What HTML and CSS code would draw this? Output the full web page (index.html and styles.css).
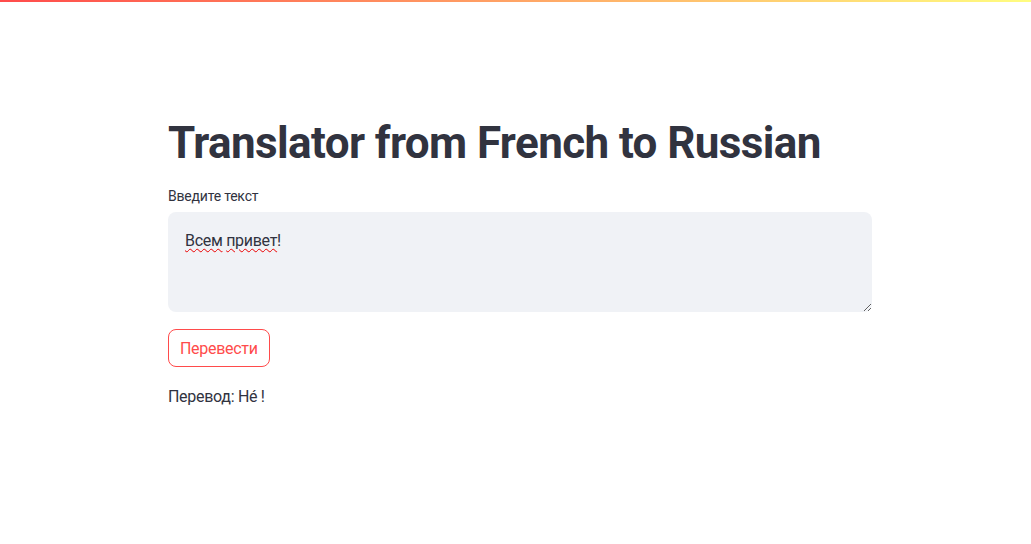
FILE: index.html
```html
<!DOCTYPE html>
<html lang="ru">
<head>
<meta charset="utf-8">
<title>Translator</title>
<link rel="stylesheet" href="styles.css">
</head>
<body>
<div class="decoration"></div>
<main class="block">
  <h1 class="title">Translator from French to Russian</h1>
  <label class="label">Введите текст</label>
  <div class="textarea"><span class="misspelled">Всем</span> <span class="misspelled">привет</span>!</div>
  <button class="btn">Перевести</button>
  <p class="result">Перевод: Hé !</p>
</main>
</body>
</html>
```
FILE: styles.css
```css
* { box-sizing: border-box; }
html, body { margin: 0; padding: 0; background: #fff; }
body {
  font-family: Roboto, "Noto Sans", sans-serif;
  color: rgb(49, 51, 63);
  font-size: 16px;
  letter-spacing: -0.3px;
}
.decoration {
  height: 2px;
  background: linear-gradient(90deg, rgb(255, 75, 75), rgb(255, 253, 128));
}
.block {
  width: 704px;
  margin-left: 168px;
  padding-top: 115px;
  display: flex;
  flex-direction: column;
  align-items: flex-start;
}
.title {
  margin: 0;
  font-size: 44px;
  font-weight: 700;
  line-height: 53px;
  letter-spacing: -0.6px;
  white-space: nowrap;
}
.label {
  margin-top: 16px;
  font-size: 14px;
  line-height: 20px;
  letter-spacing: -0.2px;
}
.textarea {
  margin-top: 6px;
  width: 100%;
  height: 100px;
  background: rgb(240, 242, 246);
  border-radius: 8px;
  padding: 16px 17px;
  line-height: 25px;
  overflow: auto;
  resize: vertical;
}
.misspelled {
  text-decoration: underline wavy rgb(235, 0, 0);
  text-decoration-thickness: 1px;
  text-underline-offset: 2px;
}
.btn {
  margin-top: 17px;
  font: inherit;
  letter-spacing: inherit;
  color: rgb(255, 75, 75);
  background: #fff;
  border: 1px solid rgb(255, 75, 75);
  border-radius: 8px;
  height: 38px;
  padding: 0 11px;
}
.result {
  margin: 17px 0 0;
  line-height: 25px;
}
```
